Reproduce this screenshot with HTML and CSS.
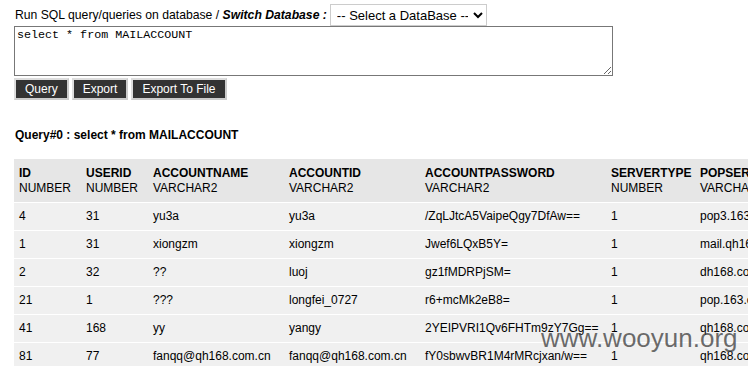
FILE: index.html
```html
<!doctype html>
<html lang="en">
    <head>
        <meta charset="UTF-8" />
        <title>Run SQL query</title>
        <link rel="stylesheet" href="styles.css">
    </head>
    <body>
        <form class="query-form">
            <div class="db-line">
                <span>Run SQL query/queries on database / <b><i>Switch Database :</i></b></span>
                <select class="db-select">
                    <option>-- Select a DataBase --</option>
                </select>
            </div>
            <textarea class="sql" rows="4">select * from MAILACCOUNT</textarea>
            <div class="buttons">
                <button type="button" class="button">Query</button>
                <button type="button" class="button">Export</button>
                <button type="button" class="button">Export To File</button>
            </div>
        </form>

        <h4 class="query-title">Query#0 : select * from MAILACCOUNT</h4>

        <table class="result">
            <thead>
                <tr>
                    <th class="c-id"><b>ID</b><br>NUMBER</th>
                    <th class="c-uid"><b>USERID</b><br>NUMBER</th>
                    <th class="c-name"><b>ACCOUNTNAME</b><br>VARCHAR2</th>
                    <th class="c-acc"><b>ACCOUNTID</b><br>VARCHAR2</th>
                    <th class="c-pwd"><b>ACCOUNTPASSWORD</b><br>VARCHAR2</th>
                    <th class="c-type"><b>SERVERTYPE</b><br>NUMBER</th>
                    <th class="c-pop"><b>POPSERVER</b><br>VARCHAR2</th>
                </tr>
            </thead>
            <tbody>
                <tr><td>4</td><td>31</td><td>yu3a</td><td>yu3a</td><td>/ZqLJtcA5VaipeQgy7DfAw==</td><td>1</td><td>pop3.163.com</td></tr>
                <tr><td>1</td><td>31</td><td>xiongzm</td><td>xiongzm</td><td>Jwef6LQxB5Y=</td><td>1</td><td>mail.qh168.com.cn</td></tr>
                <tr><td>2</td><td>32</td><td>??</td><td>luoj</td><td>gz1fMDRPjSM=</td><td>1</td><td>dh168.com</td></tr>
                <tr><td>21</td><td>1</td><td>???</td><td>longfei_0727</td><td>r6+mcMk2eB8=</td><td>1</td><td>pop.163.com</td></tr>
                <tr><td>41</td><td>168</td><td>yy</td><td>yangy</td><td>2YEIPVRI1Qv6FHTm9zY7Gg==</td><td>1</td><td>qh168.com.cn</td></tr>
                <tr><td>81</td><td>77</td><td>fanqq@qh168.com.cn</td><td>fanqq@qh168.com.cn</td><td>fY0sbwvBR1M4rMRcjxan/w==</td><td>1</td><td>qh168.com.cn</td></tr>
            </tbody>
        </table>

        <div class="watermark">www.wooyun.org</div>
    </body>
</html>
```

FILE: styles.css
```css
html, body {
    overflow: hidden;
}
body {
    font-family: "Liberation Sans", Arial, sans-serif;
    font-size: 12px;
    color: #000;
    background: #fff;
    margin: 0;
    padding: 4px 14px 0 14px;
    width: 900px;
    height: 362px;
    position: relative;
}
.query-form {
    margin: 0;
}
.db-line {
    display: flex;
    align-items: center;
    gap: 3px;
    padding-left: 1px;
    font-size: 12.2px;
    height: 22px;
}
.db-select {
    font-family: "Liberation Sans", Arial, sans-serif;
    font-size: 13px;
    width: 157px;
    height: 22px;
    padding: 0 2px;
    border: 1px solid #ccc;
    background: #fff;
    color: #000;
}
.sql {
    display: block;
    width: 599px;
    height: 50px;
    box-sizing: border-box;
    margin: 0;
    padding: 1px 2px;
    font-family: "Liberation Mono", "Courier New", monospace;
    font-size: 11.7px;
    border: 1px solid #777;
    resize: both;
}
.buttons {
    display: flex;
    gap: 3px;
    margin-top: 2px;
}
.button {
    font-family: "Liberation Sans", Arial, sans-serif;
    font-size: 12px;
    color: #fff;
    background: #333;
    border: 2px solid #ccc;
    border-top-color: #ddd;
    border-left-color: #ddd;
    height: 22px;
    padding: 0 9px;
    margin: 0;
}
.query-title {
    font-size: 12px;
    font-weight: bold;
    margin: 28px 0 0 1px;
    height: 14px;
}
.result {
    border-collapse: collapse;
    margin-top: 17px;
    table-layout: fixed;
    width: 841px;
}
.result th {
    background: #e6e6e6;
    font-weight: normal;
    text-align: left;
    vertical-align: top;
    padding: 7px 5px 6px 5px;
    line-height: 15px;
    white-space: nowrap;
}
.result th b {
    font-weight: bold;
}
.result td {
    background: #f0f0f0;
    padding: 6px 5px;
    line-height: 15px;
    border-top: 1px solid #fff;
    white-space: nowrap;
    overflow: hidden;
}
.c-id { width: 57px; }
.c-uid { width: 57px; }
.c-name { width: 126px; }
.c-acc { width: 126px; }
.c-pwd { width: 176px; }
.c-type { width: 79px; }
.c-pop { width: 150px; }
.watermark {
    position: absolute;
    left: 541px;
    top: 323px;
    font-family: "Liberation Sans", Arial, sans-serif;
    font-size: 26px;
    color: rgba(60, 60, 60, 0.75);
}
```
